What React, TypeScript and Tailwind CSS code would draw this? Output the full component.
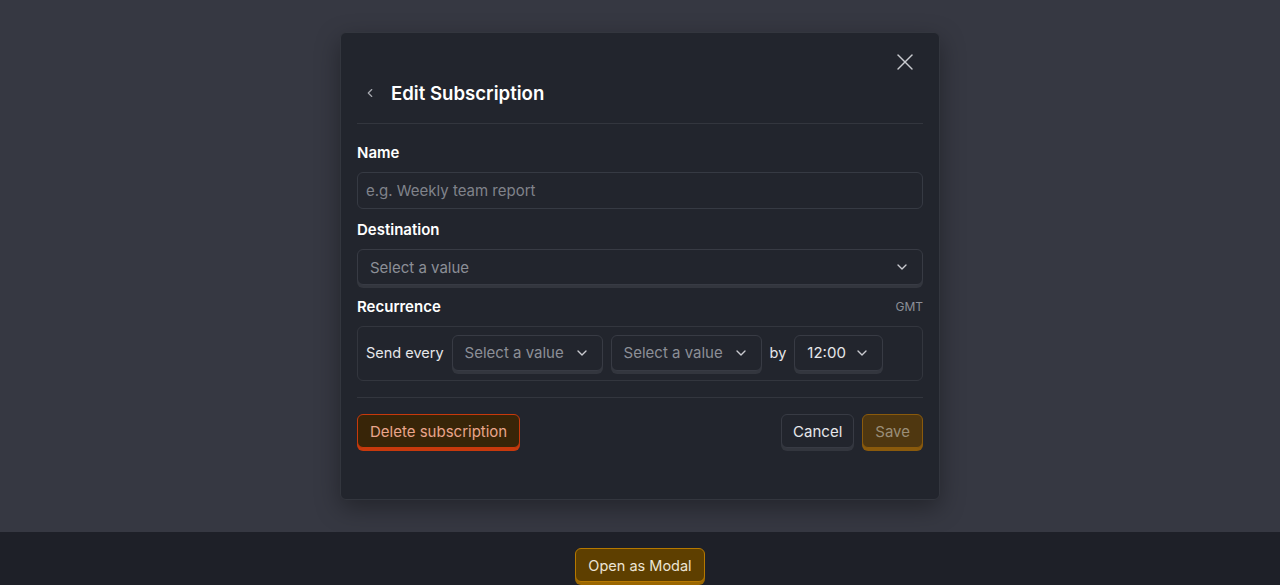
import React from "react";
import { ChevronDown, ChevronLeft, X } from "lucide-react";

const SelectBox: React.FC<{ label: string; muted?: boolean; className?: string }> = ({ label, muted = true, className = "" }) => (
  <button
    className={`flex items-center justify-between h-[36px] rounded-md border border-[#383b44] bg-[#22252d] shadow-[0_3px_0_#33363e] px-3 pt-[2px] text-[15px] whitespace-nowrap ${muted ? "text-[#8c8f97]" : "text-[#e6e7ea]"} ${className}`}
  >
    <span>{label}</span>
    <ChevronDown size={16} strokeWidth={2} className="text-[#c9cbd0] ml-2 shrink-0 -mt-[2px]" />
  </button>
);

const App: React.FC = () => {
  return (
    <div className="min-h-screen flex flex-col font-['Inter',sans-serif]">
      <div className="bg-[#363842] h-[532px] pt-[32px] flex justify-center">
        <div className="w-[600px] h-[468px] bg-[#22252d] border border-[#33363e] rounded-md shadow-[0_8px_24px_rgba(0,0,0,0.35)] px-4 pt-[15px]">
          <div className="flex justify-end h-[28px]">
            <button className="w-[28px] h-[28px] flex items-center justify-center text-[#c9cbd0] mr-[4px]">
              <X size={28} strokeWidth={1.2} />
            </button>
          </div>
          <div className="flex items-center gap-[14px] pb-[16px] border-b border-[#33363e] mt-[3px]">
            <ChevronLeft size={14} strokeWidth={2} className="text-[#a7a9af] ml-[6px]" />
            <h2 className="text-[18.6px] font-semibold text-white leading-[28px]">Edit Subscription</h2>
          </div>

          <div className="mt-[19px]">
            <label className="block text-[15px] font-semibold text-white leading-5">Name</label>
            <input
              placeholder="e.g. Weekly team report"
              className="mt-[9px] w-full h-[37px] rounded-md border border-[#363a43] bg-[#22252d] px-[8px] text-[15px] text-white placeholder:text-[#80838b] outline-none"
            />
          </div>

          <div className="mt-[11px]">
            <label className="block text-[15px] font-semibold text-white leading-5">Destination</label>
            <SelectBox label="Select a value" className="mt-[9px] w-full" />
          </div>

          <div className="mt-[12px]">
            <div className="flex items-center justify-between">
              <label className="text-[15px] font-semibold text-white leading-5">Recurrence</label>
              <span className="text-[12px] text-[#8c8f97]">GMT</span>
            </div>
            <div className="mt-[9px] flex items-center gap-2 h-[55px] rounded-md border border-[#33363e] px-2 pb-[2px]">
              <span className="text-[14.5px] text-[#e6e7ea] whitespace-nowrap">Send every</span>
              <SelectBox label="Select a value" className="w-[151px]" />
              <SelectBox label="Select a value" className="w-[151px]" />
              <span className="text-[14.5px] text-[#e6e7ea]">by</span>
              <SelectBox label="12:00" muted={false} className="w-[89px]" />
            </div>
          </div>

          <div className="mt-4 pt-4 border-t border-[#33363e] flex items-center justify-between">
            <button className="h-[34px] px-3 pt-[2px] rounded-md border border-[#c8390c] bg-[#382508] text-[15px] text-[#eaa58c] shadow-[0_3px_0_#c8390c]">
              Delete subscription
            </button>
            <div className="flex gap-2">
              <button className="h-[34px] px-[11px] pt-[2px] rounded-md border border-[#383b44] bg-[#22252d] text-[15px] text-[#e6e7ea] shadow-[0_3px_0_#33363e]">
                Cancel
              </button>
              <button className="h-[34px] px-3 pt-[2px] rounded-md border border-[#8a5a0c] bg-[#4f3710] text-[15px] text-[#9a8e78] shadow-[0_3px_0_#8a5a0c]">
                Save
              </button>
            </div>
          </div>
        </div>
      </div>
      <div className="bg-[#1e2028] flex-1 flex justify-center pt-4 pb-6">
        <button className="h-[34px] px-3 pt-[2px] rounded-md border border-[#b57800] bg-[#5e3f00] text-[14.5px] text-[#ece4d4] shadow-[0_3px_0_#9a6600]">
          Open as Modal
        </button>
      </div>
    </div>
  );
};

export default App;
